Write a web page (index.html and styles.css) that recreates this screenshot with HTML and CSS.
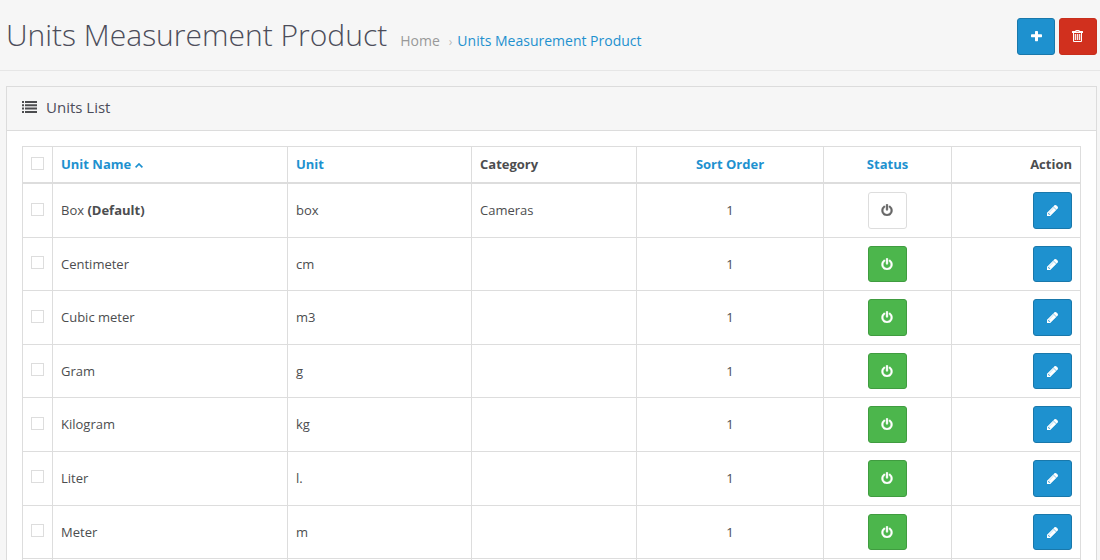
FILE: index.html
```
<!DOCTYPE html>
<html lang="en">
<head>
<meta charset="utf-8">
<title>Units Measurement Product</title>
<link rel="stylesheet" href="styles.css">
</head>
<body>
<svg class="sprite" aria-hidden="true">
  <symbol id="plus" viewBox="0 0 1408 1408"><path d="M1408 512v192q0 40-28 68t-68 28H896v416q0 40-28 68t-68 28H608q-40 0-68-28t-28-68V800H96q-40 0-68-28T0 704V512q0-40 28-68t68-28h416V96q0-40 28-68t68-28h192q40 0 68 28t28 68v320h416q40 0 68 28t28 68z"/></symbol>
  <symbol id="trash" viewBox="0 0 11 12"><path fill-rule="evenodd" d="M3 1 3.700.3Q4 0 4.500 0h2q.5 0 .8.300L8 1h2.500q.5 0 .5.500V3h-1v8q0 1-1 1H2q-1 0-1-1V3H0V1.500Q0 1 .5 1zM2 3v7.500q0 .5.500.5h6q.5 0 .5-.5V3zM4 1.500h3L6.500 1h-2z"/><path d="M3 4h1v6H3zM5 4h1v6H5zM7 4h1v6H7z" opacity=".85"/><path d="M2 4h7v6H2z" opacity=".25"/></symbol>
  <symbol id="list" viewBox="0 0 15 12"><path d="M0 0h2v2H0zM3 0h12v2H3zM0 3.300h2v2H0zM3 3.300h12v2H3zM0 6.600h2v2H0zM3 6.600h12v2H3zM0 10h2v2H0zM3 10h12v2H3z"/></symbol>
  <symbol id="power" viewBox="0 0 1536 1664"><path d="M1536 896q0 156-61 298t-164 245-245 164-298 61-298-61-245-164T61 1194 0 896q0-182 80.500-343T307 283q43-32 95.500-25t83.500 50q32 42 24.500 94.500T461 487q-98 74-151.500 181T256 896q0 104 40.500 198.500T406 1258t163.500 109.500T768 1408t198.500-40.500T1130 1258t109.500-163.500T1280 896q0-121-53.500-228T1075 487q-42-32-49.500-84.500T1050 308q31-43 84-50t95 25q146 109 226.500 270t80.500 343zM896 128v640q0 52-38 90t-90 38-90-38-38-90V128q0-52 38-90t90-38 90 38 38 90z"/></symbol>
  <symbol id="pencil" viewBox="0 0 1515 1515"><path fill-rule="evenodd" d="m363 1387 91-91-235-235-91 91v107h128v128h107zM886 459q0-22-22-22-10 0-17 7L305 986q-7 7-7 17 0 22 22 22 10 0 17-7l542-542q7-7 7-17zM832 267l416 416-832 832H0v-416zm683 96q0 53-37 90l-166 166L896 203l166-165q36-38 90-38 53 0 91 38l235 234q37 39 37 91z"/></symbol>
  <symbol id="up" viewBox="0 0 8 5"><path d="m.6 4.300 3.400-3.300 3.400 3.300" fill="none" stroke="currentColor" stroke-width="1.700"/></symbol>
</svg>
<header class="page-header">
  <div class="heading">
    <h1>Units Measurement Product</h1>
    <nav class="breadcrumb"><a>Home</a><span class="sep">›</span><a class="current">Units Measurement Product</a></nav>
  </div>
  <div class="actions">
    <button class="btn primary" aria-label="Add"><svg class="i-plus"><use href="#plus"/></svg></button>
    <button class="btn danger" aria-label="Delete"><svg class="i-trash"><use href="#trash"/></svg></button>
  </div>
</header>
<main class="panel">
  <div class="panel-heading"><svg class="i-list"><use href="#list"/></svg><h2>Units List</h2></div>
  <div class="panel-body">
    <div class="table">
      <div class="row head">
        <div class="check"><span class="box"></span></div>
        <div class="link">Unit Name<svg class="i-up"><use href="#up"/></svg></div><div class="link">Unit</div><div>Category</div>
        <div class="center link">Sort Order</div><div class="center link">Status</div><div class="right">Action</div>
      </div>
      <div class="row tall">
        <div class="check"><span class="box"></span></div><div>Box&nbsp;<b>(Default)</b></div><div>box</div><div>Cameras</div><div class="center">1</div>
        <div class="center tool"><button class="btn off" aria-label="Enable"><svg class="i-power"><use href="#power"/></svg></button></div>
        <div class="right tool"><button class="btn primary" aria-label="Edit"><svg class="i-pencil"><use href="#pencil"/></svg></button></div>
      </div>
      <div class="row">
        <div class="check"><span class="box"></span></div><div>Centimeter</div><div>cm</div><div></div><div class="center">1</div>
        <div class="center tool"><button class="btn on" aria-label="Disable"><svg class="i-power"><use href="#power"/></svg></button></div>
        <div class="right tool"><button class="btn primary" aria-label="Edit"><svg class="i-pencil"><use href="#pencil"/></svg></button></div>
      </div>
      <div class="row tall">
        <div class="check"><span class="box"></span></div><div>Cubic meter</div><div>m3</div><div></div><div class="center">1</div>
        <div class="center tool"><button class="btn on" aria-label="Disable"><svg class="i-power"><use href="#power"/></svg></button></div>
        <div class="right tool"><button class="btn primary" aria-label="Edit"><svg class="i-pencil"><use href="#pencil"/></svg></button></div>
      </div>
      <div class="row">
        <div class="check"><span class="box"></span></div><div>Gram</div><div>g</div><div></div><div class="center">1</div>
        <div class="center tool"><button class="btn on" aria-label="Disable"><svg class="i-power"><use href="#power"/></svg></button></div>
        <div class="right tool"><button class="btn primary" aria-label="Edit"><svg class="i-pencil"><use href="#pencil"/></svg></button></div>
      </div>
      <div class="row tall">
        <div class="check"><span class="box"></span></div><div>Kilogram</div><div>kg</div><div></div><div class="center">1</div>
        <div class="center tool"><button class="btn on" aria-label="Disable"><svg class="i-power"><use href="#power"/></svg></button></div>
        <div class="right tool"><button class="btn primary" aria-label="Edit"><svg class="i-pencil"><use href="#pencil"/></svg></button></div>
      </div>
      <div class="row tall">
        <div class="check high"><span class="box"></span></div><div>Liter</div><div>l.</div><div></div><div class="center">1</div>
        <div class="center tool"><button class="btn on" aria-label="Disable"><svg class="i-power"><use href="#power"/></svg></button></div>
        <div class="right tool"><button class="btn primary" aria-label="Edit"><svg class="i-pencil"><use href="#pencil"/></svg></button></div>
      </div>
      <div class="row">
        <div class="check"><span class="box"></span></div><div>Meter</div><div>m</div><div></div><div class="center">1</div>
        <div class="center tool"><button class="btn on" aria-label="Disable"><svg class="i-power"><use href="#power"/></svg></button></div>
        <div class="right tool"><button class="btn primary" aria-label="Edit"><svg class="i-pencil"><use href="#pencil"/></svg></button></div>
      </div>
      <div class="row last"><div></div><div></div><div></div><div></div><div></div><div></div><div></div></div>
    </div>
  </div>
</main>
</body>
</html>
```
FILE: styles.css
```
* { box-sizing: border-box; }
body {
  margin: 0;
  height: 560px;
  overflow: hidden;
  background: #f6f6f6;
  color: #4c4d4f;
  font: 13px/20px "Open Sans", sans-serif;
}
.sprite { display: none; }
svg { display: block; flex: none; fill: currentColor; }
.page-header {
  display: flex;
  justify-content: space-between;
  height: 71px;
  padding: 18px 3px 0 6px;
  border-bottom: 1px solid #e6e6e6;
}
.heading { display: flex; align-items: baseline; height: 36px; }
h1 {
  margin: 0;
  color: #4c4d5a;
  font-size: 30px;
  font-weight: 300;
  line-height: 34px;
  white-space: nowrap;
}
.breadcrumb { margin-left: 13px; font-size: 14px; color: #999; white-space: nowrap; }
.sep { margin: 0 5px 0 9px; color: #bbb; font-size: 12px; }
.current, .link { color: #1e91cf; }
.actions { display: flex; gap: 4px; height: 37px; }
.btn {
  display: flex;
  align-items: center;
  justify-content: center;
  width: 39px;
  height: 100%;
  padding: 0;
  border: 1px solid;
  border-radius: 3px;
  color: #fff;
}
.actions .btn { width: 38px; }
.primary { background: #1e91cf; border-color: #1978ab; }
.danger { background: #d1301e; border-color: #c72f1d; }
.on { background: #4cb64c; border-color: #409c40; }
.off { background: #fff; border-color: #ddd; color: #666; }
.panel {
  margin: 15px 3px 0 6px;
  height: 474px;
  overflow: hidden;
  background: #fff;
  border: 1px solid #dcdcdc;
  border-bottom: 0;
}
.panel-heading {
  display: flex;
  align-items: center;
  gap: 9px;
  height: 44px;
  padding: 0 15px 3px;
  background: #f6f6f6;
  border-bottom: 1px solid #dcdcdc;
}
h2 { margin: 0; color: #4c4d5a; font-size: 15px; font-weight: 400; }
.panel-body { padding: 15px 15px 0; }
.table { width: 1059px; border: solid #ddd; border-width: 1px 0 0 1px; }
.row {
  display: grid;
  grid-template-columns: 30px 235px 184px 165px 187px 128px 129px;
  height: 53px;
}
.row.tall { height: 54px; }
.row.head { height: 37px; }
.row.last { height: 1px; }
.row > div {
  display: flex;
  align-items: center;
  padding: 8px;
  border: solid #ddd;
  border-width: 0 1px 1px 0;
}
.row.tall > div { padding-bottom: 9px; }
.row > .tool, .row.tall > .tool { padding-bottom: 8px; }
.row.head > div { padding: 7px 8px 8px; border-bottom-width: 2px; font-weight: 700; }
.row.last > div { padding: 0; border-bottom: 0; }
.row > .center { justify-content: center; }
.row > .right { justify-content: flex-end; }
.row > .check { padding-bottom: 11px; }
.row.tall > .check { padding-bottom: 10px; }
.row.tall > .check.high { padding-bottom: 12px; }
.row.head > .check { padding-bottom: 9px; }
.box { width: 13px; height: 13px; border: 1px solid #ddd; background: #fff; }
b { font-weight: 700; }
.i-plus { width: 11px; height: 11px; }
.i-trash { width: 11px; height: 12px; margin: 0 1px 1px 0; }
.i-list { width: 15px; height: 12px; }
.i-power { width: 12px; height: 12px; margin: 0 1px 1px 0; stroke: currentColor; stroke-width: 50; overflow: visible; }
.i-pencil { width: 11px; height: 11px; stroke: currentColor; stroke-width: 60; overflow: visible; }
.i-up { width: 8px; height: 5px; margin: 2px 0 0 4px; }
```
